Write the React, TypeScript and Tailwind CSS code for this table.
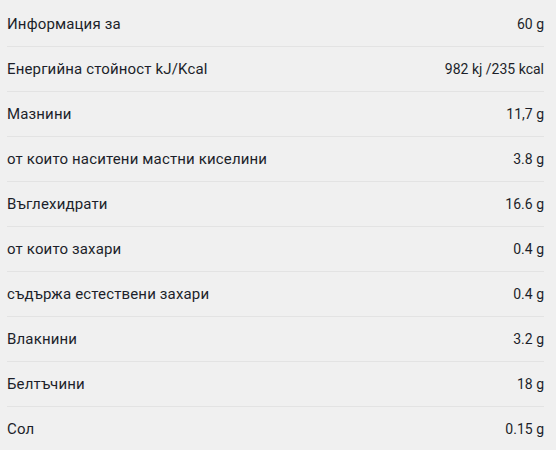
const rows = [
  { label: 'Информация за', value: '60 g' },
  { label: 'Енергийна стойност kJ/Kcal', value: '982 kj /235 kcal' },
  { label: 'Мазнини', value: '11,7 g' },
  { label: 'от които наситени мастни киселини', value: '3.8 g' },
  { label: 'Въглехидрати', value: '16.6 g' },
  { label: 'от които захари', value: '0.4 g' },
  { label: 'съдържа естествени захари', value: '0.4 g' },
  { label: 'Влакнини', value: '3.2 g' },
  { label: 'Белтъчини', value: '18 g' },
  { label: 'Сол', value: '0.15 g' },
]

export default function App() {
  return (
    <div className="w-[556px] h-[450px] bg-[#f0f0f0] pt-[2px] pl-[7px] pr-[12px] font-['Roboto',sans-serif] text-[14px] text-[#1c1f2a]">
      {rows.map((row, i) => (
        <div
          key={row.label}
          className={`flex h-[45px] items-center justify-between ${
            i < rows.length - 1 ? 'border-b border-[#e3e3e3]' : ''
          }`}
        >
          <span className="text-[15px] tracking-[0.01em]">{row.label}</span>
          <span>{row.value}</span>
        </div>
      ))}
    </div>
  )
}
